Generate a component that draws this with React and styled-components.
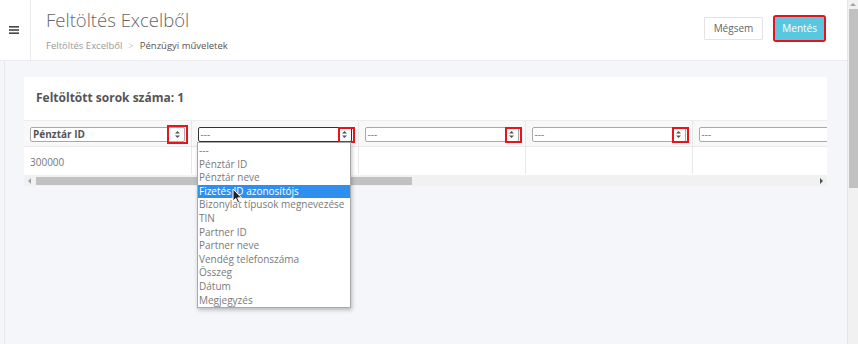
import React from 'react';
import styled, { createGlobalStyle } from 'styled-components';

const GlobalStyle = createGlobalStyle`
	html, body {
		margin: 0;
		padding: 0;
		overflow: hidden;
	}
	body {
		font-family: 'Open Sans', 'DejaVu Sans', sans-serif;
		color: #555;
	}
	* {
		box-sizing: border-box;
	}
`;

const columns = [ 'Pénztár ID', '---', '---', '---', '---' ];

const options = [
	'---',
	'Pénztár ID',
	'Pénztár neve',
	'Fizetés ID azonosítójs',
	'Bizonylat típusok megnevezése',
	'TIN',
	'Partner ID',
	'Partner neve',
	'Vendég telefonszáma',
	'Összeg',
	'Dátum',
	'Megjegyzés'
];

export default function App () {
	return (
		<React.Fragment>
			<GlobalStyle />
			<Shell>
				<Main>
					<Header>
						<MenuToggle>
							<svg width="10" height="8" viewBox="0 0 10 8">
								<rect x="0" y="0" width="10" height="1.6" fill="#444" />
								<rect x="0" y="3.2" width="10" height="1.6" fill="#444" />
								<rect x="0" y="6.4" width="10" height="1.6" fill="#444" />
							</svg>
						</MenuToggle>
						<TitleBlock>
							<Title>Feltöltés Excelből</Title>
							<Breadcrumb>
								<span>Feltöltés Excelből</span>
								<Sep>&gt;</Sep>
								<Current>Pénzügyi műveletek</Current>
							</Breadcrumb>
						</TitleBlock>
						<Actions>
							<Button>Mégsem</Button>
							<Button $primary>Mentés</Button>
						</Actions>
					</Header>

					<Content>
						<Card>
							<CardHeader>Feltöltött sorok száma: 1</CardHeader>
							<TableScroll>
								<Table>
									<thead>
										<tr>
											{columns.map((col, index) => (
												<HeadCell key={index}>
													<SelectBox $open={index === 1} $bold={index === 0}>
														<span>{col}</span>
														<Arrows>
															<svg width="5" height="7" viewBox="0 0 5 7">
																<path d="M2.5 0 L5 2.6 L0 2.6 Z" fill="#555" />
																<path d="M2.5 7 L5 4.4 L0 4.4 Z" fill="#555" />
															</svg>
														</Arrows>
														{index < 4 && <Marker $big={index === 0} />}
													</SelectBox>
												</HeadCell>
											))}
										</tr>
									</thead>
									<tbody>
										<tr>
											{columns.map((col, index) => (
												<Cell key={index}>{index === 0 ? '300000' : ''}</Cell>
											))}
										</tr>
									</tbody>
								</Table>
							</TableScroll>
							<HScroll>
								<ScrollArrow $dir="left" />
								<HThumb />
								<ScrollArrow $dir="right" />
							</HScroll>

							{/* open list of the second column's select */}
							<Dropdown>
								{options.map((opt, i) => (
									<Option key={i} $active={i === 3}>
										{opt}
									</Option>
								))}
								<Cursor width="11" height="16" viewBox="0 0 11 16">
									<path
										d="M1 1 L1 13 L3.8 10.4 L5.8 15 L7.6 14.2 L5.7 9.8 L9.5 9.8 Z"
										fill="#222"
										stroke="#fff"
										strokeWidth="1"
									/>
								</Cursor>
							</Dropdown>
						</Card>
					</Content>
				</Main>
				<PageScroll>
					<UpArrow />
					<VThumb />
				</PageScroll>
			</Shell>
		</React.Fragment>
	);
}

const Shell = styled.div`
	display: flex;
	width: 858px;
	height: 344px;
	overflow: hidden;
`;

const Main = styled.div`
	flex: 1;
	min-width: 0;
	display: flex;
	flex-direction: column;
	background: #f5f6fa;
`;

const Header = styled.header`
	height: 61px;
	flex-shrink: 0;
	display: flex;
	align-items: stretch;
	background: #fff;
	border-bottom: 1px solid #ececf0;
`;

const MenuToggle = styled.div`
	width: 31px;
	display: flex;
	align-items: center;
	justify-content: center;
	padding-right: 3px;
	border-right: 1px solid #ededed;
`;

const TitleBlock = styled.div`
	padding: 7px 0 0 15px;
`;

const Title = styled.h1`
	margin: 0;
	font-size: 18.5px;
	font-weight: 300;
	color: #666;
	line-height: 26px;
`;

const Breadcrumb = styled.div`
	margin-top: 6px;
	font-size: 9.5px;
	color: #999;
	display: flex;
	gap: 6px;
`;

const Sep = styled.span`
	color: #c4c4c4;
`;

const Current = styled.span`
	color: #555;
`;

const Actions = styled.div`
	margin-left: auto;
	display: flex;
	align-items: center;
	gap: 12px;
	padding: 0 23px 4px 0;
`;

const Button = styled.button`
	height: 23px;
	padding: 0 ${(p) => (p.$primary ? '6px' : '9px')};
	font-family: inherit;
	font-size: 10px;
	color: ${(p) => (p.$primary ? '#fff' : '#666')};
	background: ${(p) => (p.$primary ? '#59c7df' : '#fff')};
	border: 1px solid ${(p) => (p.$primary ? '#59c7df' : '#e3e3e3')};
	border-radius: 1px;
	outline: ${(p) => (p.$primary ? '2px solid #e5141c' : 'none')};
	outline-offset: 0;
	cursor: pointer;
`;

const Content = styled.main`
	flex: 1;
	min-width: 0;
	margin-left: 4px;
	border-left: 1px solid #e8e8ec;
	padding: 16px 20px 0 19px;
`;

const Card = styled.section`
	background: #fff;
	position: relative;
`;

const CardHeader = styled.div`
	height: 44px;
	display: flex;
	align-items: center;
	padding: 0 0 2px 12px;
	font-size: 12px;
	font-weight: 700;
	color: #555;
	border-bottom: 1px solid #ededed;
`;

const TableScroll = styled.div`
	overflow: hidden;
`;

const Table = styled.table`
	border-collapse: collapse;
	table-layout: fixed;
	width: 835px;
	font-size: 10px;
`;

const HeadCell = styled.th`
	width: 167px;
	height: 25px;
	padding: 6px 6px 3px 6px;
	background: #f8f8f8;
	border-right: 1px solid #e8e8e8;
	border-bottom: 1px solid #e8e8e8;
	text-align: left;
	vertical-align: top;
`;

const Cell = styled.td`
	height: 28px;
	padding: 3px 6px 0 6px;
	border-right: 1px solid #e8e8e8;
	color: #777;
	font-size: 10px;
`;

const SelectBox = styled.div`
	position: relative;
	height: 15px;
	display: flex;
	align-items: center;
	justify-content: space-between;
	padding: 0 3px 0 2px;
	background: #fff;
	border: 1px solid ${(p) => (p.$open ? '#333' : '#a9a9a9')};
	border-width: ${(p) => (p.$open ? '1.5px' : '1px')};
	border-radius: 2px;
	font-size: 10px;
	font-weight: ${(p) => (p.$bold ? 700 : 400)};
	color: ${(p) => (p.$bold ? '#555' : '#777')};
	span {
		line-height: 13px;
	}
`;

const Arrows = styled.span`
	display: flex;
	align-items: center;
	padding-right: 1px;
`;

const Marker = styled.div`
	position: absolute;
	right: -4px;
	top: ${(p) => (p.$big ? '-3px' : '-1px')};
	width: ${(p) => (p.$big ? '21px' : '17px')};
	height: ${(p) => (p.$big ? '19px' : '16px')};
	border: 2px solid #e8141b;
	pointer-events: none;
`;

const Dropdown = styled.ul`
	position: absolute;
	top: 65px;
	left: 173px;
	width: 154px;
	margin: 0;
	padding: 1px 0 0;
	list-style: none;
	background: #fff;
	border: 1px solid #a9a9a9;
	box-shadow: 1px 2px 4px rgba(0, 0, 0, 0.25);
	z-index: 5;
`;

const Option = styled.li`
	height: 13.6px;
	line-height: 13.6px;
	padding: 0 1px;
	font-size: 10px;
	font-weight: 400;
	white-space: nowrap;
	color: ${(p) => (p.$active ? '#fff' : '#7a7a7a')};
	background: ${(p) => (p.$active ? '#2f8fef' : 'transparent')};
`;

const Cursor = styled.svg`
	position: absolute;
	left: 34px;
	top: 45px;
`;

const HScroll = styled.div`
	height: 11px;
	margin: 1px 0 2px;
	display: flex;
	align-items: center;
	background: #f1f1f1;
	padding: 0 4px;
`;

const ScrollArrow = styled.span`
	width: 0;
	height: 0;
	border-top: 3px solid transparent;
	border-bottom: 3px solid transparent;
	${(p) => (p.$dir === 'left' ? 'border-right: 3px solid #a3a3a3;' : 'border-left: 3px solid #505050;')}
	${(p) => (p.$dir === 'right' ? 'margin-left: auto;' : '')}
`;

const HThumb = styled.div`
	width: 376px;
	height: 8px;
	margin-left: 5px;
	background: #c1c1c1;
`;

const PageScroll = styled.div`
	width: 11px;
	flex-shrink: 0;
	background: #f1f1f1;
	display: flex;
	flex-direction: column;
	align-items: center;
	border-left: 1px solid #e6e6e6;
`;

const UpArrow = styled.span`
	margin: 3px 0 3px;
	width: 0;
	height: 0;
	border-left: 3px solid transparent;
	border-right: 3px solid transparent;
	border-bottom: 3px solid #a3a3a3;
`;

const VThumb = styled.div`
	width: 9px;
	height: 179px;
	background: #c1c1c1;
`;
